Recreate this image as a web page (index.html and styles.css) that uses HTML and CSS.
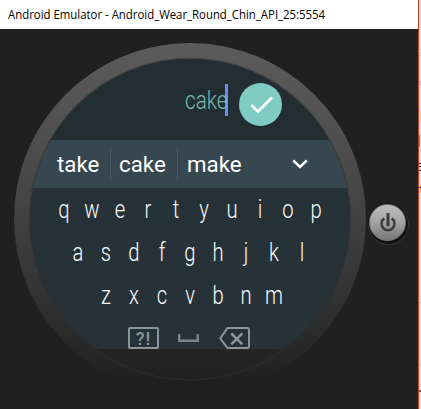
FILE: index.html
```html
<!DOCTYPE html>
<html lang="en">
<head>
<meta charset="utf-8">
<title>Android Emulator</title>
<link rel="stylesheet" href="styles.css">
</head>
<body>
<div class="desktop">
  <main class="window">
    <header class="titlebar"><span class="title">Android Emulator - Android_Wear_Round_Chin_API_25:5554</span></header>
    <section class="device">
      <div class="bezel">
        <div class="face">
          <div class="screen">
            <div class="entry">
              <span class="typed">cake</span><span class="caret"></span>
              <span class="confirm"><svg width="43" height="43" viewBox="0 0 43 43"><path d="M12.5 22l6.500 6.500 14-14" fill="none" stroke="#fff" stroke-width="2.700"/></svg></span>
            </div>
            <div class="suggestions">
              <span class="word first">take</span><span class="word second">cake</span><span class="word third">make</span>
              <svg class="chevron" width="16" height="10" viewBox="0 0 16 10"><path d="M1.2 1.3L8 8l6.8-6.7" fill="none" stroke="#fff" stroke-width="2.5"/></svg>
            </div>
            <div class="keys">
              <div class="row"><span>q</span><span>w</span><span>e</span><span>r</span><span>t</span><span>y</span><span>u</span><span>i</span><span>o</span><span>p</span></div>
              <div class="row"><span>a</span><span>s</span><span>d</span><span>f</span><span>g</span><span>h</span><span>j</span><span>k</span><span>l</span></div>
              <div class="row"><span>z</span><span>x</span><span>c</span><span>v</span><span>b</span><span>n</span><span>m</span></div>
            </div>
            <div class="tools">
              <span class="symbols">?!</span>
              <svg class="space" width="21" height="9" viewBox="0 0 21 9"><path d="M1.2 0v6.8h18.6V0" fill="none" stroke="#798489" stroke-width="2.4"/></svg>
              <svg class="erase" width="31" height="22" viewBox="0 0 31 22"><path d="M8.500 1h19.500q2 0 2 2v16q0 2-2 2H8.500L1.300 11.500z" fill="none" stroke="#8b969b" stroke-width="2"/><path d="M12.300 6.300l11 11M23.300 6.300l-11 11" fill="none" stroke="#8b969b" stroke-width="2.500"/></svg>
            </div>
          </div>
        </div>
      </div>
      <button class="power" aria-label="Power"><svg width="18" height="20" viewBox="0 0 18 20"><path d="M5.300 5.400a6.500 6.500 0 1 0 7.400 0" fill="none" stroke="#3c3c3c" stroke-width="2.500"/><path d="M9 1v11" stroke="#3c3c3c" stroke-width="3" stroke-linecap="round"/></svg></button>
    </section>
  </main>
  <aside class="behind">
    <svg width="3" height="409" viewBox="0 0 3 409"><path fill="#d6d4d6" d="M0 0h3v409H0z"/><path fill="#bfbdc5" d="M0 55h3v1H0zM0 81h3v4H0zM0 302h3v1H0zM0 365h3v1H0z"/><path fill="#d8c898" d="M1 111h2v12H1z"/><path fill="#4c90cc" d="M0 135h1v12H0z"/><path fill="#29283c" d="M0 163h3v1H0zM0 166h3v1H0zM0 170h3v1H0z"/><path fill="#d8b070" d="M1 185h2v8H1z"/><path fill="#302e2c" d="M0 187h3v1H0z"/><path fill="#666" d="M0 390h3v2H0z"/></svg>
  </aside>
</div>
</body>
</html>
```

FILE: styles.css
```css
* { box-sizing: border-box; }
body { margin: 0; background: #202020; font-family: Roboto, sans-serif; overflow: hidden; }
.desktop { display: flex; width: 421px; height: 409px; }
.window { width: 418px; height: 409px; background: #202020; }
.behind { width: 3px; border-left: 1px solid #b5482c; overflow: hidden; }
.behind svg { display: block; }
.titlebar { height: 29px; background: #fff; padding-left: 8px; line-height: 28px; }
.title {
  display: inline-block; white-space: nowrap; color: #000;
  font: 12px/28px "Open Sans", sans-serif;
  transform-origin: left center; transform: scaleX(.949);
}
.device { display: flex; padding: 14px 0 0 14px; }
.bezel {
  width: 352px; height: 352px; flex: none; padding: 16px; border-radius: 50%;
  background: linear-gradient(#5b5b5b 0, #525252 22%, #414141 50%, #343434 70%, #272727 87%, #202020 97%);
}
.face {
  width: 320px; height: 320px; border-radius: 50%; overflow: hidden;
  background: linear-gradient(#252525 90%, #212121);
  box-shadow: 0 0 0 1.5px rgba(50, 50, 50, .45);
}
.screen { height: 290px; background: #273238; overflow: hidden; }
.entry { display: flex; height: 81px; background: #232e32; padding-left: 155px; }
.typed {
  width: 40px; margin-top: 27px; white-space: nowrap; color: #74b8b0;
  font-size: 25px; line-height: 30px; font-weight: 300;
  transform-origin: left center; transform: scaleX(.83);
}
.caret { width: 3px; height: 32px; margin-top: 25px; background: #6094f4; }
.confirm { width: 43px; height: 43px; margin: 24px 0 0 11px; border-radius: 50%; background: #80cbc4; }
.confirm svg { display: block; }
.suggestions {
  display: flex; align-items: center; height: 48px; padding-left: 27px;
  background: #37474f; color: #fff; font-size: 22.3px;
}
.word { display: block; height: 32px; line-height: 32px; }
.first { width: 54px; border-right: 1px solid #4b5a61; }
.second { width: 67px; padding-left: 8px; border-right: 1px solid #4b5a61; }
.third { width: 62px; padding-left: 9px; }
.chevron { margin-left: 52px; }
.keys { color: #fafafa; font-size: 25px; font-weight: 300; }
.row { display: flex; justify-content: center; height: 43px; line-height: 44px; }
.row span { width: 28px; text-align: center; transform: scaleX(.81); }
.tools { display: flex; align-items: flex-start; padding: 10px 0 0 98px; }
.symbols {
  width: 31px; height: 22px; border: 2px solid #8b969b; border-radius: 2px;
  color: #8b969b; font-size: 18px; line-height: 19px; letter-spacing: 1px; text-align: center; font-weight: 500;
}
.space { margin: 7px 0 0 19px; }
.erase { margin-left: 20px; }
.power {
  display: grid; place-items: center; width: 37px; height: 37px; flex: none;
  margin: 161px 0 0 3px; padding: 0; border: 1px solid #777; border-radius: 50%;
  background: linear-gradient(#bdbdbd, #a6a6a6 45%, #777);
  box-shadow: 0 0 0 1px #151515, 1px 2px 0 1px #111, 1px 2px 0 2px #333;
}
```
